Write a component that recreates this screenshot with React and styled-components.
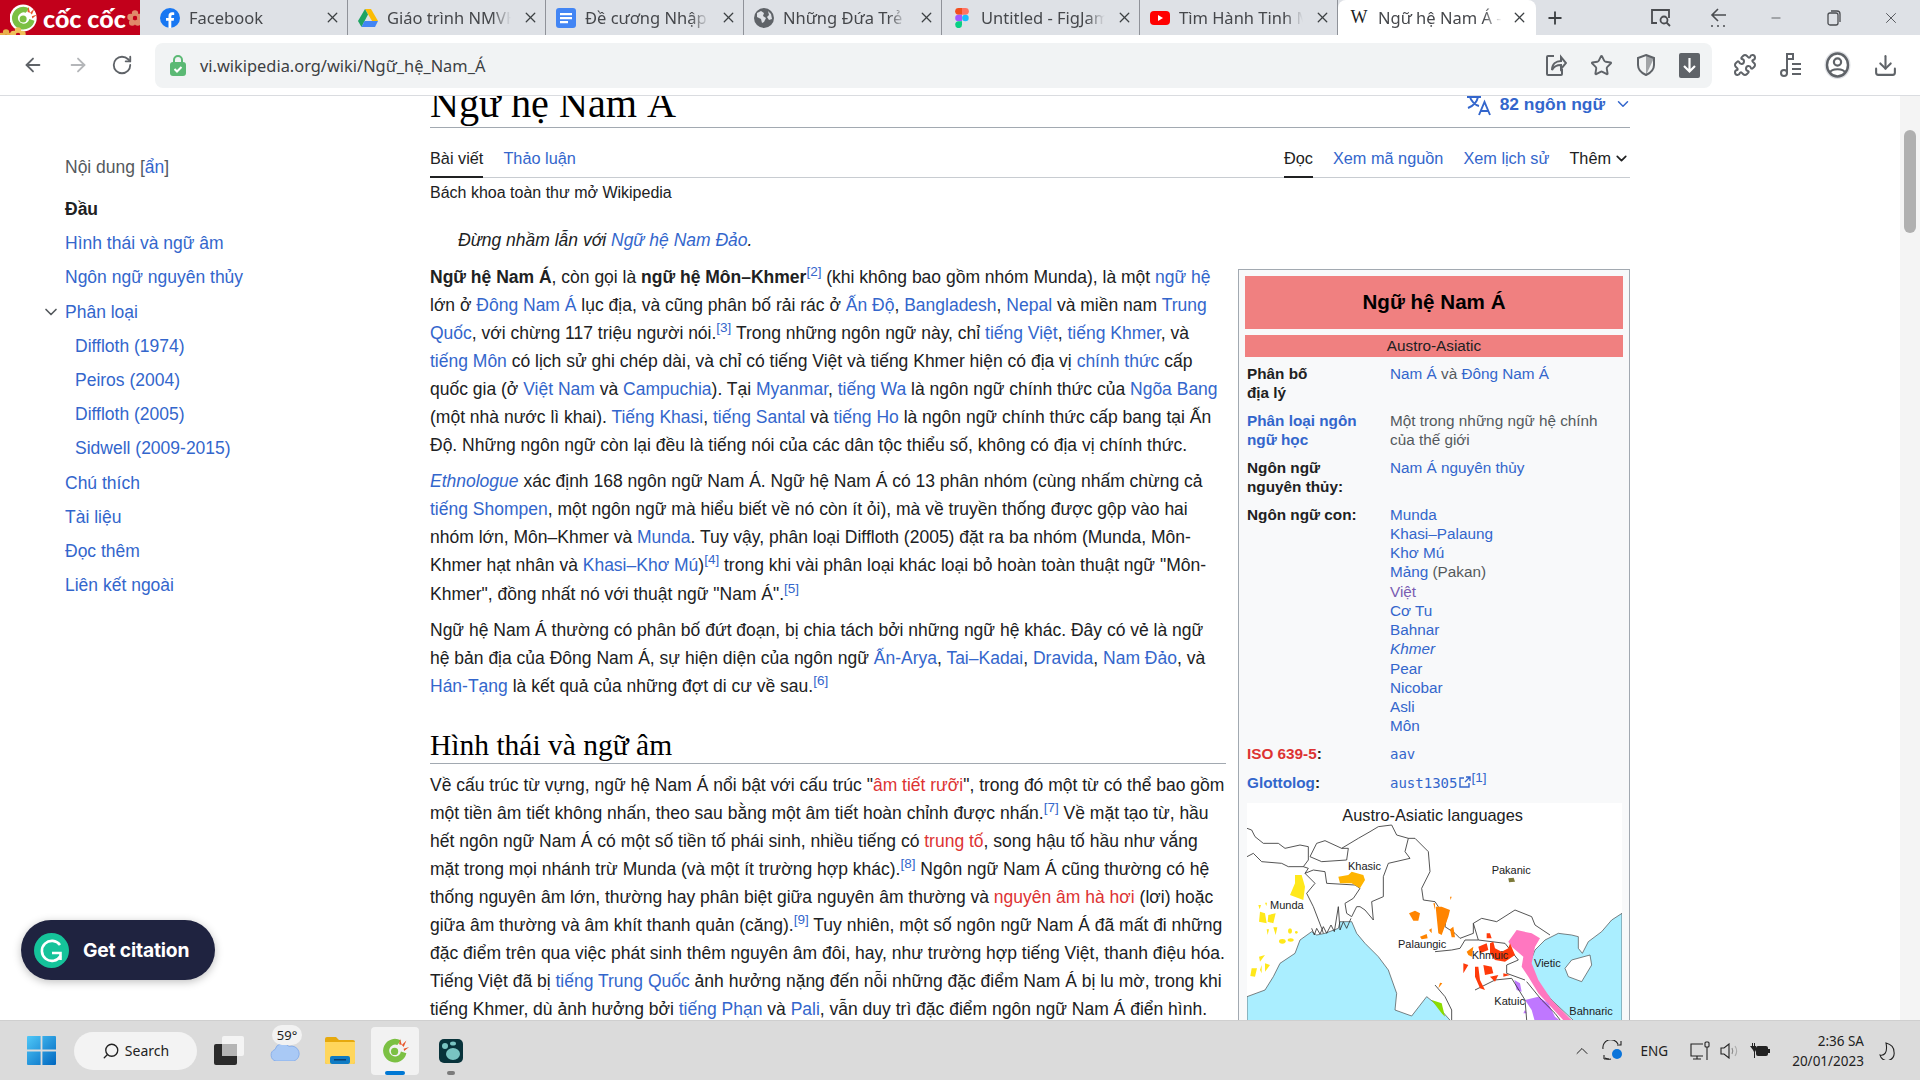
import React from "react";
import styled, { createGlobalStyle } from "styled-components";
import {
  ArrowLeft,
  ArrowRight,
  RotateCw,
  Star,
  X,
  Plus,
  Minus,
  ChevronDown,
  ChevronUp,
  Search,
  Puzzle,
  Download,
} from "lucide-react";

const Global = createGlobalStyle`
  html, body { margin: 0; padding: 0; background: #fff; }
  body { font-family: "Liberation Sans", Arial, sans-serif; color: #202122; }
  * { box-sizing: border-box; }
`;

const Page = styled.div`
  position: relative;
  width: 1920px;
  height: 1080px;
  display: flex;
  flex-direction: column;
  overflow: hidden;
`;

/* ---------- browser chrome ---------- */
const TabStrip = styled.div`
  height: 35px;
  background: #dee1e6;
  display: flex;
  flex: none;
`;
const Logo = styled.div`
  position: relative;
  width: 140px;
  margin-right: 10px;
  background: #c2001b;
  display: flex;
  align-items: center;
  padding-left: 10px;
  gap: 5px;
  color: #fff;
  font-family: Lato, sans-serif;
  font-weight: 900;
  font-size: 25px;
  flex: none;
  white-space: nowrap;
  overflow: hidden;
`;
const Tab = styled.div`
  width: 198px;
  height: 35px;
  flex: none;
  display: flex;
  align-items: center;
  padding-left: ${(p) => (p.$active ? "11px" : "10px")};
  position: relative;
  background: ${(p) => (p.$active ? "#fff" : "transparent")};
  border-radius: ${(p) => (p.$active ? "8px 8px 0 0" : "0")};
  border-right: ${(p) => (p.$sep ? "1px solid #8f9299" : "none")};
  background-clip: padding-box;
`;
const TabIcon = styled.span`
  width: 20px;
  height: 20px;
  flex: none;
  display: flex;
  align-items: center;
  justify-content: center;
`;
const TabTitle = styled.span`
  margin-left: 9px;
  width: 124px;
  flex: none;
  font-family: "Noto Sans", sans-serif;
  font-size: 16.5px;
  color: #45474b;
  white-space: nowrap;
  overflow: hidden;
  -webkit-mask-image: linear-gradient(90deg, #000 85%, transparent);
  mask-image: linear-gradient(90deg, #000 85%, transparent);
`;
const TabClose = styled.span`
  display: flex;
  margin-left: ${(p) => (p.$active ? "9px" : "11px")};
  flex: none;
  color: #3c4043;
`;
const NewTab = styled.span`
  display: flex;
  align-items: center;
  margin-left: 9px;
  color: #3c4043;
`;
const WindowControls = styled.div`
  margin-left: auto;
  display: flex;
  align-items: center;
  color: #4a4c50;
`;
const WindowBtn = styled.span`
  width: 57.5px;
  display: flex;
  justify-content: center;
`;

const Toolbar = styled.div`
  height: 61px;
  flex: none;
  background: #fff;
  border-bottom: 1px solid #dadce0;
  display: flex;
  align-items: center;
`;
const NavBtn = styled.span`
  width: 44.5px;
  display: flex;
  justify-content: center;
  color: ${(p) => p.$color || "#5f6368"};
`;
const NavGroup = styled.div`
  display: flex;
  padding-left: 11px;
  width: 155px;
  flex: none;
`;
const Omnibox = styled.div`
  width: 1557px;
  height: 45px;
  flex: none;
  background: #f1f3f4;
  border-radius: 8px;
  display: flex;
  align-items: center;
  padding-left: 14px;
`;
const UrlText = styled.span`
  margin-left: 13px;
  font-family: "Noto Sans", sans-serif;
  font-size: 16.4px;
  color: #3c4043;
`;
const OmniIcons = styled.div`
  margin-left: auto;
  display: flex;
  align-items: center;
  padding-right: 12px;
  gap: 23px;
  color: #5f6368;
`;
const ExtIcons = styled.div`
  display: flex;
  align-items: center;
  margin-left: 21px;
  gap: 21.5px;
  color: #5f6368;
`;

/* ---------- wiki page ---------- */
const Viewport = styled.div`
  flex: 1;
  min-height: 0;
  display: flex;
  overflow: hidden;
  background: #fff;
`;
const Sidebar = styled.nav`
  width: 430px;
  flex: none;
  padding: 60px 0 0 65px;
  font-size: 17.5px;
`;
const TocHead = styled.div`
  height: 22px;
  line-height: 22px;
  margin-bottom: 21px;
  color: #54595d;
`;
const TocItem = styled.div`
  height: 34.2px;
  line-height: 20px;
  padding-left: ${(p) => (p.$sub ? "10px" : "0")};
  color: #36c;
  font-weight: ${(p) => (p.$bold ? 700 : 400)};
  position: relative;
  ${(p) => p.$bold && "color: #202122;"}
`;
const TocToggle = styled.span`
  position: absolute;
  left: -24px;
  top: 0;
  color: #54595d;
  display: flex;
`;
const Article = styled.main`
  width: 1200px;
  flex: none;
`;
const TitleBar = styled.div`
  height: 32px;
  border-bottom: 1px solid #a2a9b1;
  display: flex;
  justify-content: space-between;
`;
const Title = styled.h1`
  margin: -14px 0 0;
  font-family: "Liberation Serif", serif;
  font-weight: 400;
  font-size: 40.2px;
  line-height: 44px;
  color: #000;
  white-space: nowrap;
`;
const LangBtn = styled.div`
  display: flex;
  align-items: center;
  height: 20px;
  margin: -2px -2px 0 0;
  color: #36c;
  font-weight: 700;
  font-size: 17.4px;
`;
const TabsRow = styled.div`
  height: 50px;
  border-bottom: 1px solid #c8ccd1;
  display: flex;
  justify-content: space-between;
`;
const TabGroup = styled.div`
  display: flex;
  gap: 20px;
`;
const WikiTab = styled.a`
  height: 50px;
  padding-top: 20px;
  line-height: 20px;
  font-size: 16.3px;
  color: ${(p) => (p.$current ? "#202122" : "#36c")};
  border-bottom: ${(p) => (p.$current && !p.$plain ? "2px solid #202122" : "none")};
  display: flex;
  align-items: flex-start;
`;
const Tagline = styled.div`
  font-size: 16px;
  line-height: 18px;
  margin-top: 6px;
  color: #202122;
`;
const Hatnote = styled.div`
  font-style: italic;
  font-size: 17.5px;
  line-height: 28px;
  padding-left: 28px;
  margin-top: 24px;
  margin-bottom: 9px;
  height: 28px;
`;
const Columns = styled.div`
  display: flex;
  align-items: flex-start;
`;
const TextCol = styled.div`
  width: 796px;
  flex: none;
  font-size: 17.5px;
  line-height: 28.05px;
  color: #202122;
`;
const Para = styled.p`
  margin: 0 0 8px;
`;
const Link = styled.a`
  color: ${(p) => p.$color || "#36c"};
  font-style: ${(p) => (p.$italic ? "italic" : "normal")};
`;
const RedLink = styled.a`
  color: #d33;
`;
const Ref = styled.sup`
  color: #36c;
  font-size: 13.5px;
  line-height: 0;
`;
const Heading = styled.h2`
  margin: 25.8px 0 7.1px;
  font-family: "Liberation Serif", serif;
  font-weight: 400;
  font-size: 29.5px;
  line-height: 39px;
  height: 38px;
  color: #000;
  border-bottom: 1px solid #a2a9b1;
`;

/* ---------- infobox ---------- */
const Infobox = styled.aside`
  width: 392px;
  margin-left: 12px;
  margin-top: 6px;
  flex: none;
  border: 1px solid #a2a9b1;
  background: #f8f9fa;
  padding: 6px;
  font-size: 15.3px;
  line-height: 19.25px;
`;
const InfoTitle = styled.div`
  height: 53px;
  padding-bottom: 2px;
  background: #f08080;
  font-weight: 700;
  font-size: 20.6px;
  color: #000;
  display: flex;
  align-items: center;
  justify-content: center;
`;
const InfoSub = styled.div`
  height: 22px;
  margin-top: 6px;
  background: #f08080;
  display: flex;
  align-items: center;
  justify-content: center;
`;
const InfoRow = styled.div`
  display: grid;
  grid-template-columns: 143px 1fr;
  padding-left: 2px;
  margin-top: ${(p) => p.$top || "8.4px"};
`;
const InfoLabel = styled.div`
  font-weight: 700;
  padding-right: 22px;
  color: #202122;
`;
const InfoValue = styled.div`
  color: #54595d;
`;
const Mono = styled.span`
  font-family: "DejaVu Sans Mono", "Liberation Mono", monospace;
  font-size: 14px;
  color: #36c;
`;
const MapBox = styled.figure`
  margin: 10px 0 0 2px;
  width: 375px;
  height: 219px;
  background: #fff;
  display: block;
`;

const ScrollTrack = styled.div`
  margin-left: auto;
  width: 20px;
  flex: none;
  background: #f4f4f4;
  padding: 34px 4px 0;
`;
const ScrollThumb = styled.div`
  height: 103px;
  background: #b0b0b0;
  border-radius: 6px;
`;

const CitationBtn = styled.div`
  position: absolute;
  left: 21px;
  top: 920px;
  width: 194px;
  height: 60px;
  border-radius: 30px;
  background: #1f2340;
  box-shadow: 0 2px 8px rgba(0, 0, 0, 0.25);
  display: flex;
  align-items: center;
  padding-left: 13px;
  color: #fff;
  font-family: Inter, sans-serif;
  font-weight: 700;
  font-size: 19.3px;
  letter-spacing: -0.2px;
  gap: 14px;
`;

/* ---------- taskbar ---------- */
const Taskbar = styled.div`
  height: 60px;
  flex: none;
  background: #dbdbdb;
  border-top: 1px solid #cfcfcf;
  display: flex;
  align-items: center;
  padding-left: 27px;
`;
const SearchPill = styled.div`
  width: 123px;
  height: 38px;
  margin-left: 18px;
  background: #f3f3f3;
  border-radius: 19px;
  display: flex;
  align-items: center;
  justify-content: center;
  gap: 5px;
  font-family: "Noto Sans", sans-serif;
  font-size: 14px;
  color: #222;
`;
const TaskIcon = styled.div`
  position: relative;
  width: 48px;
  height: 48px;
  margin-left: ${(p) => p.$ml || "0"};
  display: flex;
  align-items: center;
  justify-content: center;
  border-radius: 4px;
  background: ${(p) => (p.$active ? "#f2f2f2" : "transparent")};
`;
const RunDot = styled.span`
  position: absolute;
  bottom: 0;
  left: 50%;
  transform: translateX(-50%);
  width: ${(p) => (p.$active ? "20px" : "8px")};
  height: 4px;
  border-radius: 2px;
  background: ${(p) => (p.$active ? "#0078d4" : "#7b7b7b")};
`;
const WeatherBadge = styled.span`
  position: absolute;
  left: 11px;
  top: -2px;
  width: 30px;
  height: 20px;
  border-radius: 10px;
  background: #f2f2f2;
  font-family: "Noto Sans", sans-serif;
  font-size: 13px;
  line-height: 20px;
  text-align: center;
  color: #222;
`;
const Tray = styled.div`
  margin-left: auto;
  display: flex;
  align-items: center;
  padding-right: 25px;
  color: #222;
`;
const TrayText = styled.span`
  font-family: "Noto Sans", sans-serif;
  font-size: 13.5px;
  margin: 0 22px 0 17px;
`;
const Clock = styled.div`
  font-family: "Noto Sans", sans-serif;
  font-size: 13.5px;
  line-height: 20px;
  text-align: right;
  margin: 0 15px 0 22px;
`;
const TrayIcons = styled.div`
  display: flex;
  align-items: center;
  gap: 10px;
`;

/* ---------- drawings ---------- */
const FbIcon = () => (
  <svg width="20" height="20" viewBox="0 0 20 20">
    <circle cx="10" cy="10" r="10" fill="#1877f2" />
    <path d="M11.3 20v-7.2h2.4l.4-2.8h-2.8V8.3c0-.8.3-1.4 1.5-1.4h1.4V4.4c-.6-.1-1.3-.2-2.1-.2-2.2 0-3.6 1.3-3.6 3.7V10H6v2.8h2.5V20z" fill="#fff" />
  </svg>
);
const DriveIcon = () => (
  <svg width="20" height="18" viewBox="0 0 20 18">
    <path d="M7 0h6l7 12h-6z" fill="#fbbc04" />
    <path d="M7 0l3 5.5L3.5 18 0 12z" fill="#1fa463" />
    <path d="M6.5 12H20l-3 6H3.5z" fill="#4285f4" />
  </svg>
);
const DocsIcon = () => (
  <svg width="20" height="20" viewBox="0 0 20 20">
    <rect width="20" height="20" rx="3" fill="#4285f4" />
    <path d="M4 5h12v2.2H4zM4 9h12v2.2H4zM4 13h8v2.2H4z" fill="#fff" />
  </svg>
);
const GlobeIcon = () => (
  <svg width="20" height="20" viewBox="0 0 20 20">
    <circle cx="10" cy="10" r="10" fill="#5f6368" />
    <path d="M3 5l4-2 3 2-1 3 3 2-2 4-2 1-1-4-4-2zM14 3l3 3 1 5-3 1-2-3 2-2z" fill="#dee1e6" />
  </svg>
);
const FigmaIcon = () => (
  <svg width="14" height="20" viewBox="0 0 14 20">
    <path d="M7 0H3.5a3.3 3.3 0 000 6.7H7z" fill="#f24e1e" />
    <path d="M7 0h3.5a3.3 3.3 0 010 6.7H7z" fill="#ff7262" />
    <path d="M7 6.7H3.5a3.3 3.3 0 000 6.6H7z" fill="#a259ff" />
    <circle cx="10.4" cy="10" r="3.3" fill="#1abcfe" />
    <path d="M3.5 13.3H7v3.4a3.4 3.4 0 11-3.5-3.4z" fill="#0acf83" />
  </svg>
);
const YtIcon = () => (
  <svg width="20" height="20" viewBox="0 0 20 20">
    <rect y="3" width="20" height="14" rx="4" fill="#f00" />
    <path d="M8 7l5 3-5 3z" fill="#fff" />
  </svg>
);
const WikiW = styled.span`
  font-family: "Liberation Serif", serif;
  font-size: 18px;
  color: #202124;
`;
const LockIcon = () => (
  <svg width="18" height="22" viewBox="0 0 18 22">
    <path d="M5 9V6a4 4 0 018 0v3" fill="none" stroke="#5bb974" strokeWidth="2" />
    <rect x="1" y="8" width="16" height="14" rx="3" fill="#5bb974" />
    <path d="M5.5 15l2.5 2.5 4.5-4.5" fill="none" stroke="#fff" strokeWidth="2" />
  </svg>
);
const ShareIcon = () => (
  <svg width="22" height="24" viewBox="0 0 22 24" fill="none" stroke="#5f6368" strokeWidth="2">
    <path d="M9 3H3a1 1 0 00-1 1v17a1 1 0 001 1h13a1 1 0 001-1v-5" />
    <path d="M7 17c0-6 4-9 9-9V4l5 6-5 6v-4c-4 0-7 1-9 5z" />
  </svg>
);
const ShieldIcon = () => (
  <svg width="20" height="24" viewBox="0 0 20 24" fill="none" stroke="#5f6368" strokeWidth="2">
    <path d="M10 2l8 3v7c0 5-3.5 8-8 10-4.5-2-8-5-8-10V5z" />
    <path d="M10 2v20L18 5z" fill="#5f6368" opacity=".55" stroke="none" />
  </svg>
);
const SaveBoxIcon = () => (
  <svg width="21" height="25" viewBox="0 0 21 25">
    <rect width="21" height="25" rx="2" fill="#5f6368" />
    <path d="M10.5 5v13M5 13l5.5 5.5L16 13" fill="none" stroke="#fff" strokeWidth="2.2" />
  </svg>
);
const MusicIcon = () => (
  <svg width="24" height="26" viewBox="0 0 24 26" fill="none" stroke="#5f6368" strokeWidth="2">
    <circle cx="5" cy="21" r="3" />
    <path d="M8 21V2h6v5H8M13 12h9M13 17h9M13 22h9" />
  </svg>
);
const AvatarIcon = () => (
  <svg width="27" height="28" viewBox="0 0 27 28">
    <ellipse cx="13.5" cy="14" rx="13" ry="14" fill="#dfe1e5" />
    <ellipse cx="13.5" cy="14" rx="10.5" ry="11.5" fill="#fff" stroke="#5f6368" strokeWidth="2.4" />
    <circle cx="13.5" cy="11" r="3.6" fill="none" stroke="#5f6368" strokeWidth="2.2" />
    <path d="M6 22c1-5 14-5 15 0" fill="none" stroke="#5f6368" strokeWidth="2.2" />
  </svg>
);
const TabSearchIcon = () => (
  <svg width="20" height="18" viewBox="0 0 20 18" fill="none" stroke="#4a4c50" strokeWidth="1.8">
    <path d="M6 14H1V1h17v8" />
    <circle cx="13" cy="11" r="3.5" />
    <path d="M15.5 13.5L19 17" />
  </svg>
);
const BackDotsIcon = () => (
  <svg width="18" height="20" viewBox="0 0 18 20" fill="none" stroke="#4a4c50" strokeWidth="1.6">
    <path d="M8 1L2 7l6 6M2 7h14" />
    <path d="M1 18h2M7 18h2M13 18h2" />
  </svg>
);
const RestoreIcon = () => (
  <svg width="14" height="16" viewBox="0 0 14 16" fill="none" stroke="#4a4c50" strokeWidth="1.3">
    <rect x="1" y="3" width="10" height="12" rx="2" />
    <path d="M4 1h6a3 3 0 013 3v8" />
  </svg>
);
const LangIcon = () => (
  <svg width="26" height="24" viewBox="0 0 26 24" fill="none" stroke="#36c" strokeWidth="1.9" style={{ marginRight: 8 }}>
    <path d="M1 5h14M8 1v4M12 5c-1 5-5 9-10 11M4 5c1 4 5 8 9 9" />
    <path d="M13 23l5.5-13L24 23M15 19h7" />
  </svg>
);
const CocLogo = ({ size = 32, bg }) => (
  <svg width={size} height={size} viewBox="0 0 32 32">
    {bg && <circle cx="15" cy="16" r="15.5" fill="#fff" />}
    <path d="M22 5A13 13 0 1028 19L22 17A6.5 6.5 0 1118 10z" fill="#7bc043" />
    <circle cx="15" cy="17" r="4" fill="#7bc043" />
    <path d="M21 3l-1 6 3 1zM28 5l-5 5 2 2zM31 12l-6 2 .5 2.5z" fill="#e8562a" />
  </svg>
);
const Flower = ({ color = "#f0b060" }) => (
  <svg width="16" height="16" viewBox="0 0 16 16">
    <g fill={color}>
      <circle cx="8" cy="3.5" r="3.2" />
      <circle cx="12.5" cy="7" r="3.2" />
      <circle cx="10.8" cy="12.5" r="3.2" />
      <circle cx="5.2" cy="12.5" r="3.2" />
      <circle cx="3.5" cy="7" r="3.2" />
    </g>
    <circle cx="8" cy="8" r="2.2" fill="#c2001b" />
  </svg>
);
const FlowerSpot = styled.span`
  position: absolute;
  left: ${(p) => p.$x}px;
  top: ${(p) => p.$y}px;
  width: 16px;
  height: 16px;
`;
const GrammarlyIcon = () => (
  <svg width="35" height="35" viewBox="0 0 35 35">
    <circle cx="17.5" cy="17.5" r="17.5" fill="#15c39a" />
    <path d="M26 12a10 10 0 10.5 11" fill="none" stroke="#fff" strokeWidth="2.6" />
    <path d="M18 20h8.5v7" fill="none" stroke="#fff" strokeWidth="2.6" />
  </svg>
);
const WinIcon = () => (
  <svg width="29" height="29" viewBox="0 0 29 29">
    <defs>
      <linearGradient id="wn" x1="0" y1="0" x2="1" y2="1">
        <stop offset="0" stopColor="#4fc8f8" />
        <stop offset="1" stopColor="#0067c0" />
      </linearGradient>
    </defs>
    <path d="M0 1a1 1 0 011-1h12.6v13.6H0zM15.4 0H28a1 1 0 011 1v12.6H15.4zM0 15.4h13.6V29H1a1 1 0 01-1-1zM15.4 15.4H29V28a1 1 0 01-1 1H15.4z" fill="url(#wn)" />
  </svg>
);
const TaskViewIcon = () => (
  <svg width="30" height="29" viewBox="0 0 30 29">
    <rect y="8" width="23" height="21" rx="2" fill="#2b2b2b" />
    <rect x="8" width="22" height="20" rx="2" fill="#f4f4f4" />
    <rect x="8" y="8" width="15" height="12" fill="#b5b5b5" />
  </svg>
);
const CloudIcon = () => (
  <svg width="30" height="20" viewBox="0 0 30 20">
    <path d="M6 20a6 6 0 01-1-11.5 8 8 0 0114-3 7 7 0 015 14.5z" fill="#a9c9f5" stroke="#8ab0ea" />
  </svg>
);
const FolderIcon = () => (
  <svg width="30" height="27" viewBox="0 0 30 27">
    <path d="M0 2a2 2 0 012-2h9l3 3h14a2 2 0 012 2v20a2 2 0 01-2 2H2a2 2 0 01-2-2z" fill="#e6a90e" />
    <path d="M0 5h30v20a2 2 0 01-2 2H2a2 2 0 01-2-2z" fill="#ffd65c" />
    <rect x="5" y="19" width="20" height="8" rx="2" fill="#0f7bc4" />
    <rect x="9" y="22" width="12" height="1.5" fill="#083f70" />
  </svg>
);
const DarkAppIcon = () => (
  <svg width="24" height="24" viewBox="0 0 24 24">
    <rect width="24" height="24" rx="5" fill="#08333b" />
    <ellipse cx="14" cy="15" rx="7" ry="6" fill="#79c4c2" />
    <circle cx="6" cy="7" r="3" fill="#79c4c2" />
    <ellipse cx="14" cy="4.5" rx="3" ry="2" fill="#79c4c2" />
  </svg>
);
const SyncIcon = () => (
  <svg width="22" height="21" viewBox="0 0 22 21" fill="none" stroke="#222" strokeWidth="1.1">
    <path d="M1 9a8 8 0 0115-5M19 1v4h-4M2 19h5M2 15v4" />
    <path d="M3 18a8 8 0 006 1" />
    <circle cx="15" cy="14" r="5" fill="#0a74da" stroke="none" />
  </svg>
);
const MonitorIcon = () => (
  <svg width="20" height="20" viewBox="0 0 20 20" fill="none" stroke="#222" strokeWidth="1.1">
    <path d="M13 3H1v12h12M7 15v3M3 18h8" />
    <rect x="15" y="1" width="4" height="5" rx="1" />
    <path d="M17 6v13" />
  </svg>
);
const SpeakerIcon = () => (
  <svg width="20" height="16" viewBox="0 0 20 16" fill="none" stroke="#222" strokeWidth="1.1">
    <path d="M1 5h3l5-4v14l-5-4H1z" />
    <path d="M12 5c1 2 1 4 0 6" stroke="#888" />
    <path d="M15 3c2 3 2 7 0 10" stroke="#aaa" />
  </svg>
);
const PlugIcon = () => (
  <svg width="20" height="15" viewBox="0 0 20 15">
    <path d="M0 3h2V0h1v3h1V0h1v3h1v4l-1 2v6H4V9L3 7z" fill="#222" />
    <rect x="6" y="3" width="12" height="10" rx="2" fill="#222" />
    <rect x="18" y="6" width="2" height="4" fill="#222" />
  </svg>
);
const MoonIcon = () => (
  <svg width="16" height="18" viewBox="0 0 16 18" fill="none" stroke="#222" strokeWidth="1.1">
    <path d="M7 1c4 1 8 4 8 9a7 7 0 01-14 3c4 1 8-2 6-12z" />
  </svg>
);
const ExternalMark = () => (
  <svg width="12" height="12" viewBox="0 0 12 12" fill="none" stroke="#36c" strokeWidth="1.4" style={{ marginLeft: 2 }}>
    <path d="M5 2H1v9h9V7M6 6l5-5M7 1h4v4" />
  </svg>
);

/* map drawn in the coordinates of a 3x crop: one unit is a third of a pixel */
const MapLabel = styled.text`
  font-family: "Liberation Sans", sans-serif;
  font-size: 33px;
  fill: #202122;
`;
const mapLines = [
  "6,85 20,90 30,110 55,130 100,130 120,145 165,135 190,140 190,180 175,200 190,205 180,220",
  "6,170 25,160 50,185 110,190 130,200 175,200",
  "195,170 215,130 240,122 290,145 310,145 305,180 230,185 195,170",
  "290,145 340,115 375,95 400,80 440,75 455,105 490,115 480,155 495,175 430,190 415,230 415,290 380,305 385,360 360,330 345,320 335,320 320,350 305,340 300,310 325,295 345,265 330,255 245,250 240,215 205,210 180,220 210,250 185,280 205,320 230,385 235,400",
  "490,115 510,115 550,155 555,215 530,265 535,300 570,305 580,320 605,345 600,380 630,400 645,415 685,400 685,370 710,355 755,365 810,330 860,350 870,375 915,405",
  "570,455 620,450 645,445 660,420 700,420 685,370",
  "700,420 780,430 820,480 785,495 785,520 840,540",
  "690,570 750,540 800,535 840,600 845,660",
  "570,555 600,590 620,630 620,666",
  "200,385 208,405 215,385 225,402 235,380 245,400 258,375 268,395 280,320 285,390 295,365 305,385 318,355",
  "845,545 890,600 930,640 950,666",
];
const MapBlob = ({ d, fill }) => <path d={d} fill={fill} />;
const Yellow = "#ffe81a";
const Orange = "#ff8400";
const Red = "#ff3a0a";
const MapDrawing = () => (
  <svg width="375" height="219" viewBox="6 9 1125 657">
    <rect x="6" y="9" width="1125" height="657" fill="#fff" />
    <text x="292" y="62" fontFamily="Liberation Sans, sans-serif" fontSize="49" fill="#202122">
      Austro-Asiatic languages
    </text>
    <path
      d="M6 590L60 570 85 530 105 490 150 460 165 420 200 395 215 405 240 400 280 385 285 365 320 365 335 400 360 430 400 470 430 510 455 580 450 630 500 648 545 590 570 610 620 666 6 666z"
      fill="#aaeeff"
      stroke="#444"
      strokeWidth="2"
    />
    <path
      d="M990 666L920 600 870 540 850 500 870 450 900 420 940 400 980 405 1000 410 1000 445 1012 460 1030 425 1070 395 1100 360 1131 340 1131 666z"
      fill="#aaeeff"
      stroke="#444"
      strokeWidth="2"
    />
    <path d="M960 505L980 480 1035 465 1040 495 1010 545 970 530z" fill="#fff" stroke="#444" strokeWidth="2" />
    <MapBlob fill="#ff77c0" d="M790 425L815 390 860 400 885 415 870 440 860 490 880 540 920 600 985 666 960 666 880 580 850 530 830 500 835 470 800 440z" />
    <MapBlob fill="#bf77ff" d="M808 540L825 550 830 575 815 570zM840 600L880 590 910 610 930 650 950 666 870 666 860 630zM840 630L845 640 835 640z" />
    {mapLines.map((pts) => (
      <polyline key={pts} points={pts} fill="none" stroke="#333" strokeWidth="2.5" />
    ))}
    <MapBlob fill={Yellow} d="M150 225L170 225 180 260 175 300 135 285 150 250z" />
    <MapBlob fill={Yellow} d="M45 335L60 340 65 370 42 365zM70 345L92 340 85 370 68 365zM65 388L72 388 68 405zM85 382L97 382 92 405zM40 315L48 315 44 328zM60 308L66 308 64 318z" />
    <ellipse cx="112" cy="424" rx="10" ry="7" fill={Yellow} />
    <ellipse cx="137" cy="420" rx="9" ry="5" fill={Yellow} />
    <ellipse cx="135" cy="393" rx="6" ry="8" fill={Yellow} />
    <ellipse cx="154" cy="397" rx="4" ry="4" fill={Yellow} />
    <MapBlob fill={Yellow} d="M42 470L60 465 45 485zM20 505L36 505 30 530 16 528zM45 510L50 495 50 520zM60 490L75 495 60 515z" />
    <MapBlob fill="#ffb400" d="M280 230L310 225 320 215 355 225 360 240 345 265 320 250 285 250z" />
    <MapBlob fill={Orange} d="M492 340L510 332 525 340 520 362 505 362z" />
    <MapBlob fill={Orange} d="M525 410L545 402 548 415 530 418zM552 390L560 385 560 400zM565 310L570 310 570 330zM572 320L590 320 615 330 610 350 590 405 580 400 575 350zM615 388L625 380 630 412 620 412zM615 290L620 290 617 300zM585 548L592 550 580 565z" />
    <MapBlob fill={Orange} d="M665 455L685 440 680 470 670 465z" />
    <MapBlob fill={Red} d="M725 400L735 400 740 415 725 415zM700 440L725 430 730 450 705 460zM735 430L745 425 750 445 770 455 790 445 795 430 810 465 780 485 750 480 735 460zM655 490L670 495 655 520zM690 500L700 500 705 540 720 570 705 565 690 530zM715 495L740 500 745 520 720 525zM735 530L760 525 750 545zM775 520L795 525 775 530z" />
    <MapBlob fill="#8bdc00" d="M560 600L590 610 600 650 590 640 575 620z" />
    <MapBlob fill="#7d7a3a" d="M790 235L806 233 810 245 792 247z" />
    <MapLabel x="309" y="210">Khasic</MapLabel>
    <MapLabel x="75" y="326">Munda</MapLabel>
    <MapLabel x="459" y="445">Palaungic</MapLabel>
    <MapLabel x="740" y="222">Pakanic</MapLabel>
    <MapLabel x="680" y="478">Khmuic</MapLabel>
    <MapLabel x="867" y="502">Vietic</MapLabel>
    <MapLabel x="748" y="614">Katuic</MapLabel>
    <MapLabel x="973" y="646">Bahnaric</MapLabel>
  </svg>
);

const tabs = [
  { title: "Facebook", icon: <FbIcon /> },
  { title: "Giáo trình NMVH", icon: <DriveIcon /> },
  { title: "Đề cương Nhập môn", icon: <DocsIcon /> },
  { title: "Những Đứa Trẻ Nam", icon: <GlobeIcon /> },
  { title: "Untitled - FigJam", icon: <FigmaIcon /> },
  { title: "Tìm Hành Tinh Mới", icon: <YtIcon /> },
];

const toc = [
  { label: "Đầu", bold: true },
  { label: "Hình thái và ngữ âm" },
  { label: "Ngôn ngữ nguyên thủy" },
  { label: "Phân loại", open: true },
  { label: "Diffloth (1974)", sub: true },
  { label: "Peiros (2004)", sub: true },
  { label: "Diffloth (2005)", sub: true },
  { label: "Sidwell (2009-2015)", sub: true },
  { label: "Chú thích" },
  { label: "Tài liệu" },
  { label: "Đọc thêm" },
  { label: "Liên kết ngoài" },
];

const branches = ["Munda", "Khasi–Palaung", "Khơ Mú", "Mảng", "Việt", "Cơ Tu", "Bahnar", "Khmer", "Pear", "Nicobar", "Asli", "Môn"];

const BrowserChrome = () => (
  <>
    <TabStrip>
      <Logo>
        <CocLogo size={28} bg />
        cốc cốc
        <FlowerSpot $x={-2} $y={20}><Flower color="#e8b14c" /></FlowerSpot>
        <FlowerSpot $x={10} $y={18}><Flower color="#efc15a" /></FlowerSpot>
        <FlowerSpot $x={127} $y={1}><Flower color="#e08a6a" /></FlowerSpot>
      </Logo>
      {tabs.map((t) => (
        <Tab key={t.title} $sep>
          <TabIcon>{t.icon}</TabIcon>
          <TabTitle>{t.title}</TabTitle>
          <TabClose><X size={17} strokeWidth={1.8} /></TabClose>
        </Tab>
      ))}
      <Tab $active>
        <TabIcon><WikiW>W</WikiW></TabIcon>
        <TabTitle>Ngữ hệ Nam Á - W</TabTitle>
        <TabClose $active><X size={17} strokeWidth={1.8} /></TabClose>
      </Tab>
      <NewTab><Plus size={20} strokeWidth={2.2} /></NewTab>
      <WindowControls>
        <WindowBtn><TabSearchIcon /></WindowBtn>
        <WindowBtn><BackDotsIcon /></WindowBtn>
        <WindowBtn><Minus size={14} strokeWidth={1.4} /></WindowBtn>
        <WindowBtn><RestoreIcon /></WindowBtn>
        <WindowBtn><X size={18} strokeWidth={1.2} /></WindowBtn>
      </WindowControls>
    </TabStrip>
    <Toolbar>
      <NavGroup>
        <NavBtn><ArrowLeft size={22} /></NavBtn>
        <NavBtn $color="#b4b6b9"><ArrowRight size={22} /></NavBtn>
        <NavBtn><RotateCw size={22} /></NavBtn>
      </NavGroup>
      <Omnibox>
        <LockIcon />
        <UrlText>vi.wikipedia.org/wiki/Ngữ_hệ_Nam_Á</UrlText>
        <OmniIcons>
          <ShareIcon />
          <Star size={23} />
          <ShieldIcon />
          <SaveBoxIcon />
        </OmniIcons>
      </Omnibox>
      <ExtIcons>
        <Puzzle size={24} />
        <MusicIcon />
        <AvatarIcon />
        <Download size={25} />
      </ExtIcons>
    </Toolbar>
  </>
);

const Toc = () => (
  <Sidebar>
    <TocHead>Nội dung [<Link>ẩn</Link>]</TocHead>
    {toc.map((t) => (
      <TocItem key={t.label} $sub={t.sub} $bold={t.bold}>
        {t.open && <TocToggle><ChevronDown size={20} /></TocToggle>}
        {t.label}
      </TocItem>
    ))}
  </Sidebar>
);

const InfoBox = () => (
  <Infobox>
    <InfoTitle>Ngữ hệ Nam Á</InfoTitle>
    <InfoSub>Austro-Asiatic</InfoSub>
    <InfoRow $top="7px">
      <InfoLabel>Phân bố<br />địa lý</InfoLabel>
      <InfoValue><Link>Nam Á</Link> và <Link>Đông Nam Á</Link></InfoValue>
    </InfoRow>
    <InfoRow>
      <InfoLabel><Link>Phân loại ngôn ngữ học</Link></InfoLabel>
      <InfoValue>Một trong những ngữ hệ chính của thế giới</InfoValue>
    </InfoRow>
    <InfoRow>
      <InfoLabel>Ngôn ngữ nguyên thủy:</InfoLabel>
      <InfoValue><Link>Nam Á nguyên thủy</Link></InfoValue>
    </InfoRow>
    <InfoRow>
      <InfoLabel>Ngôn ngữ con:</InfoLabel>
      <InfoValue>
        {branches.map((b) => (
          <div key={b}>
            <Link $color={b === "Việt" ? "#795cb2" : undefined} $italic={b === "Khmer"}>{b}</Link>
            {b === "Mảng" && " (Pakan)"}
          </div>
        ))}
      </InfoValue>
    </InfoRow>
    <InfoRow>
      <InfoLabel><RedLink>ISO 639-5</RedLink>:</InfoLabel>
      <InfoValue><Mono>aav</Mono></InfoValue>
    </InfoRow>
    <InfoRow>
      <InfoLabel><Link>Glottolog</Link>:</InfoLabel>
      <InfoValue><Mono>aust1305</Mono><ExternalMark /><Ref>[1]</Ref></InfoValue>
    </InfoRow>
    <MapBox><MapDrawing /></MapBox>
  </Infobox>
);

const WikiArticle = () => (
  <Article>
    <TitleBar>
      <Title>Ngữ hệ Nam Á</Title>
      <LangBtn><LangIcon />82 ngôn ngữ<ChevronDown size={18} style={{ marginLeft: 9 }} /></LangBtn>
    </TitleBar>
    <TabsRow>
      <TabGroup>
        <WikiTab $current>Bài viết</WikiTab>
        <WikiTab>Thảo luận</WikiTab>
      </TabGroup>
      <TabGroup>
        <WikiTab $current>Đọc</WikiTab>
        <WikiTab>Xem mã nguồn</WikiTab>
        <WikiTab>Xem lịch sử</WikiTab>
        <WikiTab $current $plain>Thêm<ChevronDown size={17} strokeWidth={2.4} style={{ marginTop: 2, marginLeft: 2 }} /></WikiTab>
      </TabGroup>
    </TabsRow>
    <Tagline>Bách khoa toàn thư mở Wikipedia</Tagline>
    <Hatnote>Đừng nhầm lẫn với <Link $italic>Ngữ hệ Nam Đảo</Link>.</Hatnote>
    <Columns>
      <TextCol>
        <Para>
          <b>Ngữ hệ Nam Á</b>, còn gọi là <b>ngữ hệ Môn–Khmer</b><Ref>[2]</Ref> (khi không bao gồm nhóm Munda), là một <Link>ngữ hệ</Link> lớn ở <Link>Đông Nam Á</Link> lục địa, và cũng phân bố rải rác ở <Link>Ấn Độ</Link>, <Link>Bangladesh</Link>, <Link>Nepal</Link> và miền nam <Link>Trung Quốc</Link>, với chừng 117 triệu người nói.<Ref>[3]</Ref> Trong những ngôn ngữ này, chỉ <Link>tiếng Việt</Link>, <Link>tiếng Khmer</Link>, và <Link>tiếng Môn</Link> có lịch sử ghi chép dài, và chỉ có tiếng Việt và tiếng Khmer hiện có địa vị <Link>chính thức</Link> cấp quốc gia (ở <Link>Việt Nam</Link> và <Link>Campuchia</Link>). Tại <Link>Myanmar</Link>, <Link>tiếng Wa</Link> là ngôn ngữ chính thức của <Link>Ngõa Bang</Link> (một nhà nước lì khai). <Link>Tiếng Khasi</Link>, <Link>tiếng Santal</Link> và <Link>tiếng Ho</Link> là ngôn ngữ chính thức cấp bang tại Ấn Độ. Những ngôn ngữ còn lại đều là tiếng nói của các dân tộc thiểu số, không có địa vị chính thức.
        </Para>
        <Para>
          <Link $italic>Ethnologue</Link> xác định 168 ngôn ngữ Nam Á. Ngữ hệ Nam Á có 13 phân nhóm (cùng nhấm chừng cả <Link>tiếng Shompen</Link>, một ngôn ngữ mà hiểu biết về nó còn ít ỏi), mà về truyền thống được gộp vào hai nhóm lớn, Môn–Khmer và <Link>Munda</Link>. Tuy vậy, phân loại Diffloth (2005) đặt ra ba nhóm (Munda, Môn-Khmer hạt nhân và <Link>Khasi–Khơ Mú</Link>)<Ref>[4]</Ref> trong khi vài phân loại khác loại bỏ hoàn toàn thuật ngữ "Môn-Khmer", đồng nhất nó với thuật ngữ "Nam Á".<Ref>[5]</Ref>
        </Para>
        <Para>
          Ngữ hệ Nam Á thường có phân bố đứt đoạn, bị chia tách bởi những ngữ hệ khác. Đây có vẻ là ngữ hệ bản địa của Đông Nam Á, sự hiện diện của ngôn ngữ <Link>Ấn-Arya</Link>, <Link>Tai–Kadai</Link>, <Link>Dravida</Link>, <Link>Nam Đảo</Link>, và <Link>Hán-Tạng</Link> là kết quả của những đợt di cư về sau.<Ref>[6]</Ref>
        </Para>
        <Heading>Hình thái và ngữ âm</Heading>
        <Para>
          Về cấu trúc từ vựng, ngữ hệ Nam Á nổi bật với cấu trúc "<RedLink>âm tiết rưỡi</RedLink>", trong đó một từ có thể bao gồm một tiền âm tiết không nhấn, theo sau bằng một âm tiết hoàn chỉnh được nhấn.<Ref>[7]</Ref> Về mặt tạo từ, hầu hết ngôn ngữ Nam Á có một số tiền tố phái sinh, nhiều tiếng có <RedLink>trung tố</RedLink>, song hậu tố hầu như vắng mặt trong mọi nhánh trừ Munda (và một ít trường hợp khác).<Ref>[8]</Ref> Ngôn ngữ Nam Á cũng thường có hệ thống nguyên âm lớn, thường hay phân biệt giữa nguyên âm thường và <RedLink>nguyên âm hà hơi</RedLink> (lơi) hoặc giữa âm thường và âm khít thanh quản (căng).<Ref>[9]</Ref> Tuy nhiên, một số ngôn ngữ Nam Á đã mất đi những đặc điểm trên qua việc phát sinh thêm nguyên âm đôi, hay, như trường hợp tiếng Việt, thanh điệu hóa. Tiếng Việt đã bị <Link>tiếng Trung Quốc</Link> ảnh hưởng nặng đến nỗi những đặc điểm Nam Á bị lu mờ, trong khi tiếng Khmer, dù ảnh hưởng bởi <Link>tiếng Phạn</Link> và <Link>Pali</Link>, vẫn duy trì đặc điểm ngôn ngữ Nam Á điển hình.
        </Para>
      </TextCol>
      <InfoBox />
    </Columns>
  </Article>
);

const WinTaskbar = () => (
  <Taskbar>
    <WinIcon />
    <SearchPill><Search size={18} strokeWidth={1.8} style={{ transform: "scaleX(-1)" }} />Search</SearchPill>
    <TaskIcon $ml="8px"><TaskViewIcon /></TaskIcon>
    <TaskIcon $ml="8px"><CloudIcon /><WeatherBadge>59°</WeatherBadge></TaskIcon>
    <TaskIcon $ml="7px"><FolderIcon /></TaskIcon>
    <TaskIcon $ml="7px" $active><CocLogo size={29} /><RunDot $active /></TaskIcon>
    <TaskIcon $ml="8px"><DarkAppIcon /><RunDot /></TaskIcon>
    <Tray>
      <ChevronUp size={20} strokeWidth={1.2} style={{ marginRight: 10 }} />
      <SyncIcon />
      <TrayText>ENG</TrayText>
      <TrayIcons>
        <MonitorIcon />
        <SpeakerIcon />
        <PlugIcon />
      </TrayIcons>
      <Clock>2:36 SA<br />20/01/2023</Clock>
      <MoonIcon />
    </Tray>
  </Taskbar>
);

const App = () => (
  <Page>
    <Global />
    <BrowserChrome />
    <Viewport>
      <Toc />
      <WikiArticle />
      <ScrollTrack><ScrollThumb /></ScrollTrack>
    </Viewport>
    <WinTaskbar />
    <CitationBtn><GrammarlyIcon />Get citation</CitationBtn>
  </Page>
);

export default App;
